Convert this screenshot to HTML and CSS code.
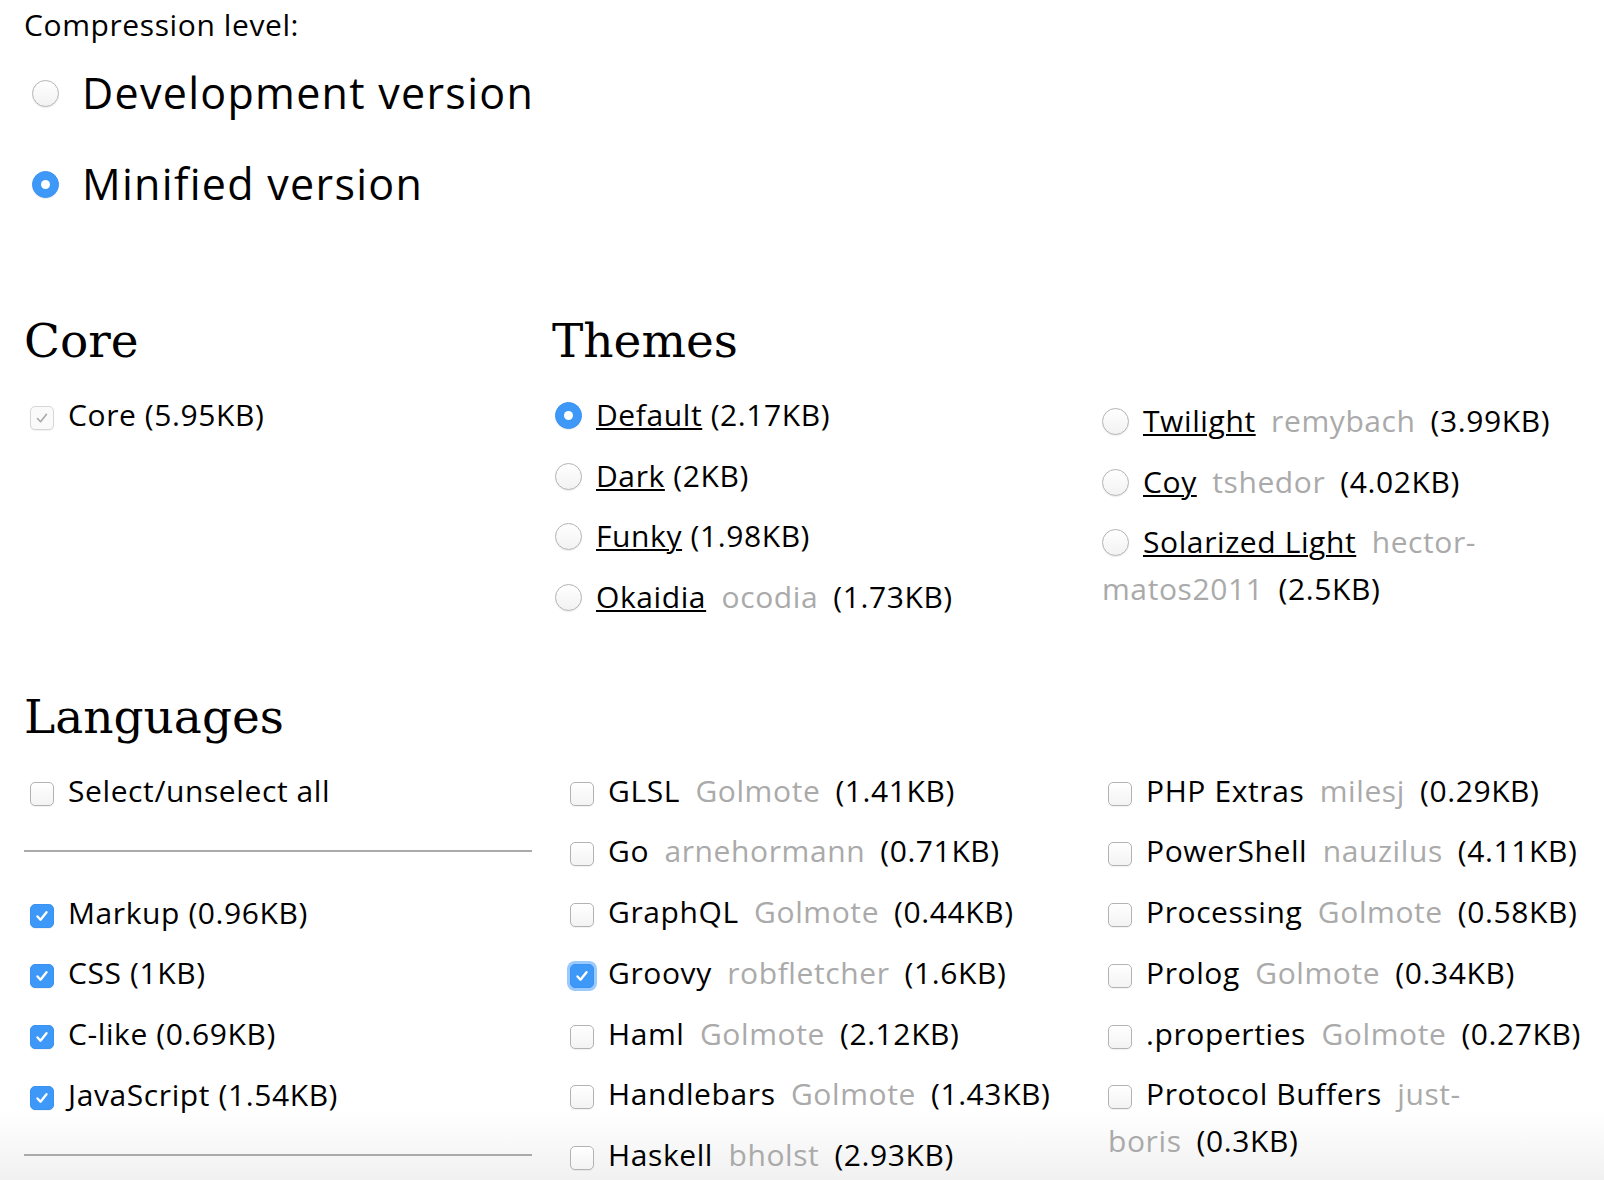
FILE: index.html
```html
<!DOCTYPE html>
<html lang="en">
<head>
<meta charset="utf-8">
<title>Download Prism</title>
<link rel="stylesheet" href="styles.css">
</head>
<body>
<main class="page">
  <section class="compression">
    <p class="compression-label">Compression level:</p>
    <label class="big-option"><span class="radio big"></span>Development version</label>
    <label class="big-option second"><span class="radio big on"></span>Minified version</label>
  </section>

  <div class="top-row">
    <section class="core">
      <h2>Core</h2>
      <label class="opt"><span class="cb disabled"><svg viewBox="0 0 24 24"><path d="M7.5 12.5l3 3.2 6-7.4"/></svg></span>Core (5.95KB)</label>
    </section>

    <section class="themes">
      <h2>Themes</h2>
      <div class="theme-cols">
        <div class="theme-col">
          <label class="opt"><span class="radio on"></span><a class="name">Default</a> (2.17KB)</label>
          <label class="opt"><span class="radio"></span><a class="name">Dark</a> (2KB)</label>
          <label class="opt"><span class="radio"></span><a class="name">Funky</a> (1.98KB)</label>
          <label class="opt"><span class="radio"></span><a class="name">Okaidia</a> <span class="owner">ocodia</span><span class="size">(1.73KB)</span></label>
        </div>
        <div class="theme-col second">
          <label class="opt"><span class="radio"></span><a class="name">Twilight</a> <span class="owner">remybach</span><span class="size">(3.99KB)</span></label>
          <label class="opt"><span class="radio"></span><a class="name">Coy</a> <span class="owner">tshedor</span><span class="size">(4.02KB)</span></label>
          <label class="opt"><span class="radio"></span><a class="name">Solarized Light</a> <span class="owner">hector-matos2011</span><span class="size">(2.5KB)</span></label>
        </div>
      </div>
    </section>
  </div>

  <section class="languages">
    <h2>Languages</h2>
    <div class="lang-cols">
      <div class="lang-col first">
        <label class="opt"><span class="cb"></span>Select/unselect all</label>
        <hr class="rule">
        <label class="opt"><span class="cb on"><svg viewBox="0 0 24 24"><path d="M7.5 12.5l3 3.2 6-7.4"/></svg></span>Markup (0.96KB)</label>
        <label class="opt"><span class="cb on"><svg viewBox="0 0 24 24"><path d="M7.5 12.5l3 3.2 6-7.4"/></svg></span>CSS (1KB)</label>
        <label class="opt"><span class="cb on"><svg viewBox="0 0 24 24"><path d="M7.5 12.5l3 3.2 6-7.4"/></svg></span>C-like (0.69KB)</label>
        <label class="opt"><span class="cb on"><svg viewBox="0 0 24 24"><path d="M7.5 12.5l3 3.2 6-7.4"/></svg></span>JavaScript (1.54KB)</label>
        <hr class="rule">
      </div>
      <div class="lang-col">
        <label class="opt"><span class="cb"></span>GLSL <span class="owner">Golmote</span><span class="size">(1.41KB)</span></label>
        <label class="opt"><span class="cb"></span>Go <span class="owner">arnehormann</span><span class="size">(0.71KB)</span></label>
        <label class="opt"><span class="cb"></span>GraphQL <span class="owner">Golmote</span><span class="size">(0.44KB)</span></label>
        <label class="opt"><span class="cb on focus"><svg viewBox="0 0 24 24"><path d="M7.5 12.5l3 3.2 6-7.4"/></svg></span>Groovy <span class="owner">robfletcher</span><span class="size">(1.6KB)</span></label>
        <label class="opt"><span class="cb"></span>Haml <span class="owner">Golmote</span><span class="size">(2.12KB)</span></label>
        <label class="opt"><span class="cb"></span>Handlebars <span class="owner">Golmote</span><span class="size">(1.43KB)</span></label>
        <label class="opt"><span class="cb"></span>Haskell <span class="owner">bholst</span><span class="size">(2.93KB)</span></label>
      </div>
      <div class="lang-col">
        <label class="opt"><span class="cb"></span>PHP Extras <span class="owner">milesj</span><span class="size">(0.29KB)</span></label>
        <label class="opt"><span class="cb"></span>PowerShell <span class="owner">nauzilus</span><span class="size">(4.11KB)</span></label>
        <label class="opt"><span class="cb"></span>Processing <span class="owner">Golmote</span><span class="size">(0.58KB)</span></label>
        <label class="opt"><span class="cb"></span>Prolog <span class="owner">Golmote</span><span class="size">(0.34KB)</span></label>
        <label class="opt"><span class="cb"></span>.properties <span class="owner">Golmote</span><span class="size">(0.27KB)</span></label>
        <label class="opt"><span class="cb"></span>Protocol Buffers <span class="owner">just-boris</span><span class="size">(0.3KB)</span></label>
      </div>
    </div>
  </section>
</main>
</body>
</html>
```

FILE: styles.css
```css
html, body {
  margin: 0;
  padding: 0;
  overflow: hidden;
}

html {
  background: linear-gradient(to bottom, #ffffff 0, #ffffff 1110px, #f1f1f1 1180px);
  min-height: 1180px;
}

body {
  font-family: "Open Sans", "Liberation Sans", sans-serif;
  font-size: 30px;
  line-height: 47px;
  letter-spacing: 0.02em;
  color: #000;
  height: 1180px;
}

.page {
  padding: 1px 10px 0 24px;
}

/* compression */
.compression-label {
  margin: 0;
}

.big-option {
  display: block;
  font-size: 43px;
  line-height: 69px;
  letter-spacing: 0.03em;
  padding-left: 8px;
  margin-top: 10px;
}

.big-option.second {
  margin-top: 22px;
}

/* headings */
h2 {
  margin: 0 0 22px 0;
  font-family: "DejaVu Serif", "Liberation Serif", serif;
  font-weight: normal;
  font-size: 47px;
  line-height: 56px;
  letter-spacing: 0;
}

.top-row {
  display: grid;
  grid-template-columns: 528px 1fr;
  margin-top: 95px;
}

.core .opt {
  padding-left: 6px;
}

.theme-cols {
  display: grid;
  grid-template-columns: 550px 1fr;
}

.theme-col .opt {
  padding-left: 3px;
}

.theme-col.second {
  padding-top: 6px;
}

.theme-col.second .opt {
  padding-left: 0;
}

/* options */
.opt {
  display: block;
  margin-bottom: 13.7px;
}

.name {
  color: #000;
  text-decoration: underline;
  text-decoration-thickness: 2px;
  text-underline-offset: 2px;
}

.owner {
  color: #aaaaaa;
  margin: 0 15px 0 7px;
}

/* radios */
.radio {
  display: inline-block;
  box-sizing: border-box;
  width: 27px;
  height: 27px;
  border-radius: 50%;
  border: 1px solid #b3b3b3;
  background: linear-gradient(to bottom, #ffffff, #f2f2f2);
  box-shadow: 0 1px 1px rgba(0, 0, 0, 0.08);
  vertical-align: -3px;
  margin-right: 14px;
  position: relative;
}

.radio.big {
  vertical-align: 2px;
  margin-right: 23px;
}

.radio.on {
  background: #3d98f8;
  border-color: #3a92f2;
}

.radio.on::after {
  content: "";
  position: absolute;
  left: 50%;
  top: 50%;
  width: 9px;
  height: 9px;
  margin: -4.5px 0 0 -4.5px;
  border-radius: 50%;
  background: #fff;
}

/* checkboxes */
.cb {
  display: inline-block;
  box-sizing: border-box;
  width: 24px;
  height: 24px;
  border-radius: 5px;
  border: 1px solid #b3b3b3;
  background: linear-gradient(to bottom, #ffffff, #f3f3f3);
  box-shadow: 0 1px 1px rgba(0, 0, 0, 0.06);
  vertical-align: -4px;
  margin-right: 14px;
  position: relative;
}

.cb svg {
  position: absolute;
  left: -1px;
  top: -1px;
  width: 24px;
  height: 24px;
}

.cb path {
  fill: none;
  stroke: #fff;
  stroke-width: 2.4;
  stroke-linecap: round;
  stroke-linejoin: round;
}

.cb.on {
  background: #3d98f8;
  border-color: #3a92f2;
}

.cb.focus {
  box-shadow: 0 0 0 3px #9cc9fb;
}

.cb.disabled {
  border-color: #d6d6d6;
  background: #fafafa;
}

.cb.disabled path {
  stroke: #a8a8a8;
  stroke-width: 1.6;
}

/* languages */
.languages {
  margin-top: 55px;
}

.lang-cols {
  display: grid;
  grid-template-columns: 546px 538px 1fr;
}

.lang-col.first {
  width: 508px;
}

.lang-col.first .opt {
  padding-left: 6px;
}

.rule {
  border: 0;
  height: 2px;
  background: #aaaaaa;
  margin: 36px 0 37px 0;
}
```
